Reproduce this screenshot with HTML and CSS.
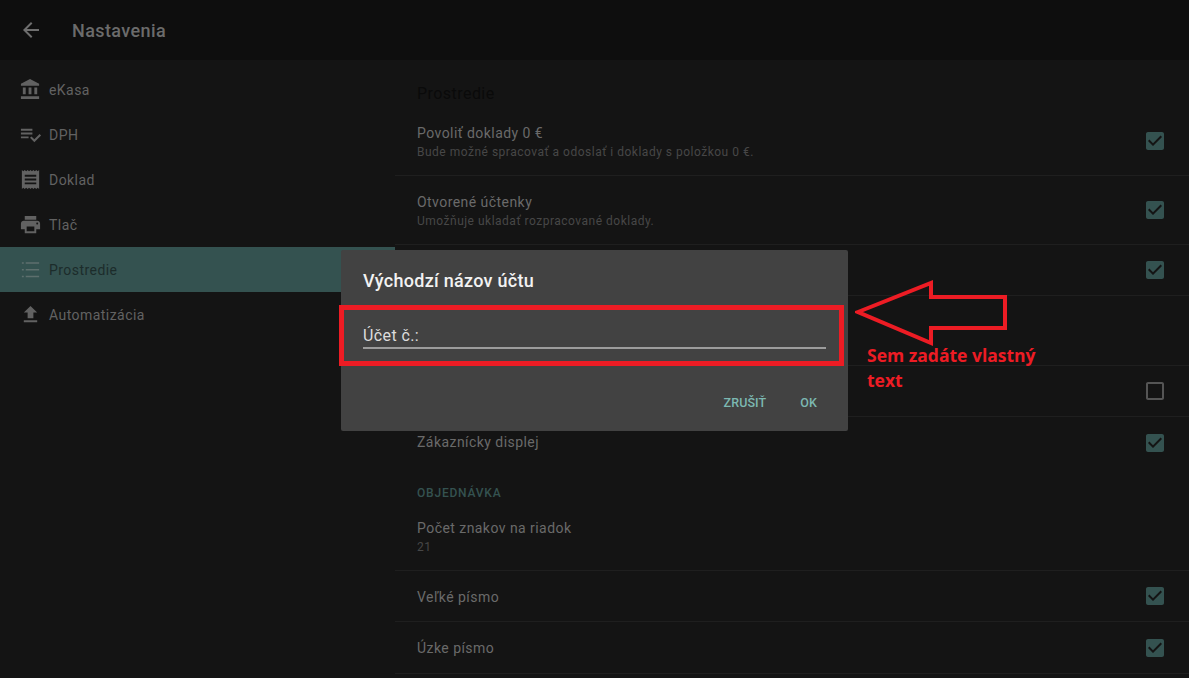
FILE: index.html
```html
<!DOCTYPE html>
<html lang="sk">
<head>
<meta charset="utf-8">
<title>Nastavenia</title>
<link rel="stylesheet" href="styles.css">
</head>
<body>
<svg class="defs" aria-hidden="true">
  <symbol id="i-bank" viewBox="0 0 24 24"><path d="M4 10v7h3v-7H4zm6 0v7h3v-7h-3zM2 22h19v-3H2v3zm14-12v7h3v-7h-3zm-4.500-9L2 6v2h19V6l-9.500-5z"/></symbol>
  <symbol id="i-check-list" viewBox="0 0 24 24"><path d="M14 10H2v2h12v-2zm0-4H2v2h12V6zM2 16h8v-2H2v2zm19.500-4.500L23 13l-6.990 7-4.510-4.500L13 14l3.010 3 5.490-5.500z"/></symbol>
  <symbol id="i-receipt" viewBox="0 0 24 24"><path d="M18 17H6v-2h12v2zm0-4H6v-2h12v2zm0-4H6V7h12v2zM3 22l1.500-1.500L6 22l1.500-1.500L9 22l1.500-1.500L12 22l1.500-1.500L15 22l1.500-1.500L18 22l1.500-1.500L21 22V2l-1.500 1.500L18 2l-1.500 1.500L15 2l-1.500 1.500L12 2l-1.500 1.500L9 2 7.500 3.500 6 2 4.500 3.500 3 2v20z"/></symbol>
  <symbol id="i-print" viewBox="0 0 24 24"><path d="M19 8H5c-1.660 0-3 1.340-3 3v6h4v4h12v-4h4v-6c0-1.660-1.340-3-3-3zm-3 11H8v-5h8v5zm3-7c-.55 0-1-.45-1-1s.45-1 1-1 1 .45 1 1-.45 1-1 1zm-1-9H6v4h12V3z"/></symbol>
  <symbol id="i-list" viewBox="0 0 24 24"><path d="M3 4.500h2V6H3zm0 7h2V13H3zm0 7h2V20H3zM7 4.500h14V6H7zm0 7h14V13H7zm0 7h14V20H7z"/></symbol>
  <symbol id="i-upload" viewBox="0 0 24 24"><path d="M9 16h6v-6h4l-7-7-7 7h4zm-4 2h14v2H5z"/></symbol>
  <symbol id="i-checked" viewBox="0 0 24 24"><path fill-rule="evenodd" d="M19 3H5c-1.100 0-2 .9-2 2v14c0 1.100.9 2 2 2h14c1.100 0 2-.9 2-2V5c0-1.100-.9-2-2-2zm-9 14l-5-5 1.410-1.410L10 14.170l7.590-7.590L19 8l-9 9z"/></symbol>
  <symbol id="i-unchecked" viewBox="0 0 24 24"><path d="M19 5v14H5V5h14m0-2H5c-1.100 0-2 .9-2 2v14c0 1.100.9 2 2 2h14c1.100 0 2-.9 2-2V5c0-1.100-.9-2-2-2z"/></symbol>
</svg>

<div class="app">
  <header class="toolbar">
    <svg class="back" viewBox="0 0 24 24"><path d="M20 11H7.830l5.590-5.590L12 4l-8 8 8 8 1.410-1.410L7.830 13H20v-2z"/></svg>
    <h1 class="toolbar-title">Nastavenia</h1>
  </header>
  <div class="main">
    <nav class="side">
      <a class="side-item"><svg class="side-icon"><use href="#i-bank"/></svg><span>eKasa</span></a>
      <a class="side-item"><svg class="side-icon"><use href="#i-check-list"/></svg><span>DPH</span></a>
      <a class="side-item"><svg class="side-icon"><use href="#i-receipt"/></svg><span>Doklad</span></a>
      <a class="side-item"><svg class="side-icon"><use href="#i-print"/></svg><span>Tlač</span></a>
      <a class="side-item is-active"><svg class="side-icon"><use href="#i-list"/></svg><span>Prostredie</span></a>
      <a class="side-item"><svg class="side-icon"><use href="#i-upload"/></svg><span>Automatizácia</span></a>
    </nav>
    <section class="content">
      <h2 class="page-heading">Prostredie</h2>
      <div class="row row-tall">
        <div class="row-text"><div class="row-title">Povoliť doklady 0 €</div><div class="row-sub">Bude možné spracovať a odoslať i doklady s položkou 0 €.</div></div>
        <svg class="check"><use href="#i-checked"/></svg>
      </div>
      <div class="row row-tall">
        <div class="row-text"><div class="row-title">Otvorené účtenky</div><div class="row-sub">Umožňuje ukladať rozpracované doklady.</div></div>
        <svg class="check"><use href="#i-checked"/></svg>
      </div>
      <div class="row row-short">
        <svg class="check"><use href="#i-checked"/></svg>
      </div>
      <div class="row row-hidden"></div>
      <div class="row row-short">
        <svg class="check check-off"><use href="#i-unchecked"/></svg>
      </div>
      <div class="row row-short row-plain">
        <div class="row-text"><div class="row-title">Zákaznícky displej</div></div>
        <svg class="check"><use href="#i-checked"/></svg>
      </div>
      <h3 class="section-head">OBJEDNÁVKA</h3>
      <div class="row row-tall">
        <div class="row-text"><div class="row-title">Počet znakov na riadok</div><div class="row-sub">21</div></div>
      </div>
      <div class="row row-short">
        <div class="row-text"><div class="row-title">Veľké písmo</div></div>
        <svg class="check"><use href="#i-checked"/></svg>
      </div>
      <div class="row row-short row-last">
        <div class="row-text"><div class="row-title">Úzke písmo</div></div>
        <svg class="check"><use href="#i-checked"/></svg>
      </div>
    </section>
  </div>
</div>

<div class="dialog">
  <div class="dialog-title">Východzí názov účtu</div>
  <div class="dialog-field">Účet č.:</div>
  <div class="dialog-actions">
    <span class="dialog-btn">ZRUŠIŤ</span>
    <span class="dialog-btn">OK</span>
  </div>
</div>

<div class="mark-box"></div>
<svg class="mark-arrow" viewBox="0 0 160 70">
  <path d="M3 32 L76 3 L76 17 L150 17 L150 48 L76 48 L76 63 Z"/>
</svg>
<p class="mark-text">Sem zadáte vlastný text</p>
</body>
</html>
```
FILE: styles.css
```css
* { box-sizing: border-box; }
html, body { margin: 0; height: 100%; overflow: hidden; }
body { background: #141414; font-family: Roboto, "Liberation Sans", sans-serif; color: #6e6e6e; }
.defs { width: 0; height: 0; position: absolute; }

.app { display: flex; flex-direction: column; height: 678px; }
.toolbar { height: 60px; flex: none; display: flex; align-items: center; padding-left: 19px; background: #0e0e0e; }
.back { width: 24px; height: 24px; fill: #6e6e6e; }
.toolbar-title { margin: 0 0 0 29px; font-size: 18px; font-weight: 500; color: #6b6b6b; letter-spacing: .4px; }

.main { flex: 1; display: flex; min-height: 0; }
.side { width: 395px; flex: none; padding-top: 7px; }
.side-item { height: 45px; display: flex; align-items: center; gap: 7px; padding-left: 19px; font-size: 14px; letter-spacing: .45px; color: #626262; }
.side-icon { width: 23px; height: 23px; fill: #626262; }
.side-item.is-active { background: #345250; color: #1c2c2b; }
.is-active .side-icon { fill: #5d6f6d; }

.content { flex: 1; min-width: 0; }
.page-heading { margin: 0; height: 47px; padding: 24px 0 0 22px; font-size: 16px; line-height: 19px; font-weight: 400; color: #0a0a0a; letter-spacing: .45px; }
.row { display: flex; align-items: center; justify-content: space-between; padding: 0 22px; border-bottom: 1px solid #1f1f1f; }
.row-plain { border-bottom: 0; }
.row-tall { height: 69px; }
.row-hidden { height: 70px; }
.row-short { height: 51px; }
.row-last { height: 52px; }
.row-short:not(:has(.row-text)) { justify-content: flex-end; }
.row-text { padding-top: 2px; }
.row-tall .row-text { padding-top: 4px; }
.row-plain .row-text { padding-top: 0; }
.row-title { font-size: 14px; line-height: 19px; color: #6a6a6a; letter-spacing: .45px; }
.row-sub { font-size: 12px; line-height: 19px; color: #474747; letter-spacing: .5px; }
.check { width: 24px; height: 24px; fill: #345250; }
.check-off { fill: #555; }
.section-head { margin: 0; height: 34px; padding: 18px 0 0 22px; font-size: 12px; line-height: 15px; font-weight: 500; color: #345250; letter-spacing: .8px; }

.dialog { position: absolute; left: 341px; top: 250px; width: 507px; height: 181px; background: #424242; border-radius: 2px; padding: 0 22px; display: flex; flex-direction: column; }
.dialog-title { margin-top: 20px; font-size: 18px; line-height: 22px; font-weight: 500; color: #f2f2f2; letter-spacing: .28px; }
.dialog-field { margin-top: 31px; height: 26px; font-size: 16px; line-height: 26px; color: #dcdcdc; border-bottom: 2px solid #9c9c9c; letter-spacing: .4px; }
.dialog-actions { margin-top: auto; height: 58px; display: flex; justify-content: flex-end; align-items: center; gap: 34px; padding-right: 9px; }
.dialog-btn { font-size: 12.500px; font-weight: 500; color: #7cb8b1; letter-spacing: .1px; }

.mark-box { position: absolute; left: 339px; top: 305px; width: 505px; height: 61px; border: 5px solid #ed1c24; }
.mark-arrow { position: absolute; left: 855px; top: 280px; width: 160px; height: 70px; fill: none; stroke: #ed1c24; stroke-width: 4; }
.mark-text { position: absolute; left: 867px; top: 343px; width: 190px; margin: 0; font-family: "Open Sans", sans-serif; font-weight: 700; font-size: 17.500px; line-height: 25px; color: #ed1c24; }
```
